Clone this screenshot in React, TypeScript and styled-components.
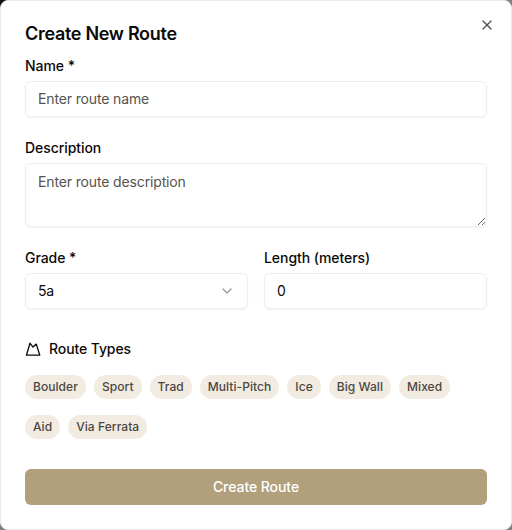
import React from 'react';
import styled, { createGlobalStyle } from 'styled-components';
import { ChevronDown, X } from 'lucide-react';

const GlobalStyle = createGlobalStyle`
  *, *::before, *::after { box-sizing: border-box; }
  body {
    margin: 0;
    background: linear-gradient(135deg, #111 0 4%, #808080 8%);
    font-family: Inter, sans-serif;
    color: #0c0a09;
    overflow: hidden;
  }
`;

const Dialog = styled.div`
  position: relative;
  display: flex;
  flex-direction: column;
  gap: 16px;
  width: 512px;
  height: 530px;
  padding: 24px;
  background: #fff;
  border: 1px solid #edecea;
  border-radius: 8px;
`;

const Title = styled.h2`
  margin: 0;
  font-size: 18px;
  line-height: 18px;
  font-weight: 600;
  letter-spacing: -0.3px;
`;

const CloseButton = styled.button`
  position: absolute;
  top: 16px;
  right: 16px;
  display: flex;
  padding: 0;
  border: 0;
  background: none;
  color: #0c0a09;
  opacity: 0.7;
`;

const Form = styled.form`
  display: flex;
  flex-direction: column;
`;

const Field = styled.div`
  display: flex;
  flex-direction: column;
  gap: 8px;
  margin-bottom: 24px;
`;

const Label = styled.label`
  font-size: 14px;
  line-height: 14px;
  font-weight: 500;
  letter-spacing: -0.06px;
`;

const Input = styled.input`
  width: 100%;
  height: 36px;
  padding: 3px 12px 5px;
  border: 1px solid #efeeec;
  border-radius: 6px;
  background: #fff;
  box-shadow: 0 1px 2px rgba(0, 0, 0, 0.05);
  font: 14px/20px Inter, sans-serif;
  letter-spacing: -0.14px;
  color: #0c0a09;
  &::placeholder { color: #57534e; }
`;

const TextArea = styled(Input).attrs({ as: 'textarea' })`
  display: block;
  height: 64px;
  padding: 8px 12px;
`;

const Columns = styled.div`
  display: grid;
  grid-template-columns: 1fr 1fr;
  gap: 16px;
`;

const Select = styled.button`
  display: flex;
  align-items: center;
  justify-content: space-between;
  height: 36px;
  padding: 0 12px;
  border: 1px solid #efeeec;
  border-radius: 6px;
  background: #fff;
  box-shadow: 0 1px 2px rgba(0, 0, 0, 0.05);
  font: 14px/20px Inter, sans-serif;
  letter-spacing: -0.14px;
  color: #0c0a09;
  svg { opacity: 0.4; }
`;

const SectionTitle = styled.div`
  display: flex;
  align-items: center;
  gap: 8px;
  margin-top: 6px;
  font-size: 14px;
  line-height: 20px;
  font-weight: 500;
  letter-spacing: -0.1px;
`;

const Tags = styled.div`
  display: flex;
  flex-wrap: wrap;
  gap: 16px 8px;
  margin: 16px 0 30px;
`;

const Tag = styled.span`
  height: 24px;
  padding: 4px 8px;
  border-radius: 12px;
  background: #f2ebe1;
  color: #4b4743;
  font-size: 12px;
  line-height: 16px;
  font-weight: 500;
  letter-spacing: 0.06px;
`;

const Submit = styled.button`
  height: 36px;
  border: 0;
  border-radius: 6px;
  background: #b2a07d;
  color: #fff;
  font: 500 14px/20px Inter, sans-serif;
  letter-spacing: -0.06px;
`;

const types = ['Boulder', 'Sport', 'Trad', 'Multi-Pitch', 'Ice', 'Big Wall', 'Mixed', 'Aid', 'Via Ferrata'];

const MountainIcon = () => (
  <svg width="16" height="16" viewBox="0 0 16 16" fill="none" stroke="currentColor" strokeWidth="1.3" strokeLinejoin="round">
    <path d="M1.4 14.2 5 2.2l3 3.9 3.3-3 3.5 11.1z" />
  </svg>
);

export default function App() {
  return (
    <>
      <GlobalStyle />
      <Dialog role="dialog">
        <Title>Create New Route</Title>
        <CloseButton aria-label="Close"><X size={16} /></CloseButton>
        <Form>
          <Field><Label>Name *</Label><Input placeholder="Enter route name" /></Field>
          <Field><Label>Description</Label><TextArea placeholder="Enter route description" /></Field>
          <Columns>
            <Field><Label>Grade *</Label><Select type="button">5a<ChevronDown size={16} /></Select></Field>
            <Field><Label>Length (meters)</Label><Input defaultValue="0" /></Field>
          </Columns>
          <SectionTitle><MountainIcon />Route Types</SectionTitle>
          <Tags>{types.map((type) => <Tag key={type}>{type}</Tag>)}</Tags>
          <Submit type="button">Create Route</Submit>
        </Form>
      </Dialog>
    </>
  );
}
